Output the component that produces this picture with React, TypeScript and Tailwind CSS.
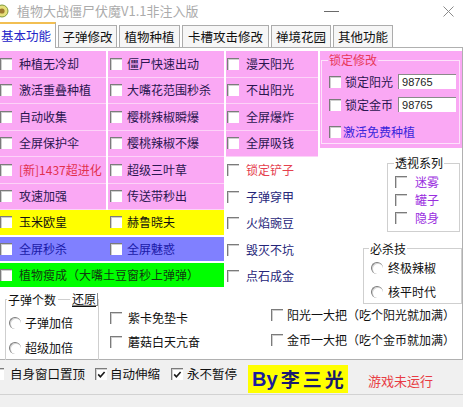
import React from "react";

const PINK = "bg-[#faa8f4]";
const INK = "text-[#2a1650]";

function Check({ on = false }: { on?: boolean }) {
  return (
    <span className="relative inline-block h-[12px] w-[12px] shrink-0 border-t border-l border-[#7b7b7b] bg-white shadow-[inset_1px_1px_0_#cfcfcf]">
      {on && (
        <svg viewBox="0 0 11 11" className="absolute left-0 top-0 h-[11px] w-[11px]">
          <path d="M2.2 5.4 L4.4 7.8 L8.6 3" fill="none" stroke="#1a1a1a" strokeWidth="1.6" />
        </svg>
      )}
    </span>
  );
}

function Radio() {
  return (
    <span className="inline-block h-[12px] w-[12px] shrink-0 rounded-full border-t border-l border-[#7b7b7b] bg-white shadow-[inset_1px_1px_0_#d6d6d6]" />
  );
}

function Opt({
  label,
  cls,
  color = INK,
  on,
}: {
  label: string;
  cls: string;
  color?: string;
  on?: boolean;
}) {
  return (
    <div className={`flex items-center ${cls}`}>
      <Check on={on} />
      <span className={`whitespace-nowrap ${color}`}>{label}</span>
    </div>
  );
}

// column geometry: x 0-106 | 108-224 | 226-318
const C1 = "w-[106px] gap-[7px] pl-0";
const C2 = "w-[116px] gap-[5px] pl-[2px]";
const C3 = "w-[92px] gap-[7px] pl-[1px]";
const CELL = `border-b border-[#fcd3f8] ${PINK}`;

const pinkRows: [string, string, string][] = [
  ["种植无冷却", "僵尸快速出动", "漫天阳光"],
  ["激活重叠种植", "大嘴花范围秒杀", "不出阳光"],
  ["自动收集", "樱桃辣椒瞬爆", "全屏爆炸"],
  ["全屏保护伞", "樱桃辣椒不爆", "全屏吸钱"],
];

function TitleBar() {
  return (
    <div className="flex h-[22px] items-center bg-white">
      <svg viewBox="0 0 14 14" className="-ml-[5px] h-[14px] w-[14px]">
        <circle cx="7" cy="7" r="6" fill="#e6df7a" stroke="#7f9a3a" strokeWidth="1" />
        <circle cx="7" cy="7" r="2.6" fill="#a07a30" />
      </svg>
      <span className="ml-[8px] text-[13px] leading-[16px] text-[#ababab]">植物大战僵尸伏魔V1.1非注入版</span>
      <span className="ml-auto mr-[104px] h-px w-[15px] bg-[#6a6a6a]" />
      <svg viewBox="0 0 11 11" className="mr-[9px] h-[11px] w-[11px]">
        <path d="M0.5 0.5 L10.5 10.5 M10.5 0.5 L0.5 10.5" stroke="#8a8a8a" strokeWidth="1" />
      </svg>
    </div>
  );
}

function Tabs() {
  const tab = "ml-[2px] flex h-[22px] items-center justify-center border-x border-t border-[#acacac] bg-[#f6f6f6] text-[12.5px] leading-[14px] text-[#111]";
  return (
    <div className="flex h-[25px] items-end bg-white">
      <div className="relative z-10 -mb-px flex h-[26px] w-[56px] items-center border-t-2 border-r border-t-[#f2bf52] border-r-[#acacac] bg-white pl-[1px] text-[12.5px] leading-[14px] text-[#2323c8]">
        基本功能
      </div>
      <div className={`${tab} w-[59px]`}>子弹修改</div>
      <div className={`${tab} w-[61px]`}>植物种植</div>
      <div className={`${tab} w-[87px]`}>卡槽攻击修改</div>
      <div className={`${tab} w-[60px]`}>禅境花园</div>
      <div className={`${tab} w-[60px]`}>其他功能</div>
    </div>
  );
}

function Grid() {
  return (
    <div className="flex w-[318px] shrink-0 flex-col">
      {pinkRows.map(([a, b, c]) => (
        <div key={a} className="flex h-[26.5px] gap-[2px]">
          <Opt label={a} cls={`${C1} ${CELL}`} />
          <Opt label={b} cls={`${C2} ${CELL}`} />
          <Opt label={c} cls={`${C3} ${CELL}`} />
        </div>
      ))}
      <div className="flex h-[26.5px] gap-[2px]">
        <Opt label="[新]1437超进化" cls={`${C1} ${CELL}`} color="text-[#e2304e]" />
        <Opt label="超级三叶草" cls={`${C2} ${CELL}`} />
        <Opt label="锁定铲子" cls={C3} color="text-[#e5404e]" />
      </div>
      <div className="flex h-[26.5px] gap-[2px]">
        <Opt label="攻速加强" cls={`${C1} ${CELL}`} />
        <Opt label="传送带秒出" cls={`${C2} ${CELL}`} />
        <Opt label="子弹穿甲" cls={C3} color="text-[#26267a]" />
      </div>
      <div className="flex h-[26.5px] gap-[2px]">
        <div className="flex h-[24.5px] w-[224px] bg-[#ffff00]">
          <Opt label="玉米欧皇" cls="w-[108px] gap-[7px]" color="text-[#111]" />
          <Opt label="赫鲁晓夫" cls="gap-[5px] pl-[2px]" color="text-[#111]" />
        </div>
        <Opt label="火焰豌豆" cls={C3} color="text-[#26267a]" />
      </div>
      <div className="flex h-[26.5px] gap-[2px]">
        <div className="flex h-[24.5px] w-[224px] bg-[#8080ff]">
          <Opt label="全屏秒杀" cls="w-[108px] gap-[7px]" color="text-[#1a1aa8]" />
          <Opt label="全屏魅惑" cls="gap-[5px] pl-[2px]" color="text-[#1a1aa8]" />
        </div>
        <Opt label="毁灭不坑" cls={C3} color="text-[#26267a]" />
      </div>
      <div className="flex h-[26.5px] gap-[2px]">
        <div className="flex h-[24px] w-[224px] bg-[#00ff00]">
          <Opt label="植物瘦成（大嘴土豆窗秒上弹弹）" cls="gap-[7px]" color="text-[#103a10]" />
        </div>
        <Opt label="点石成金" cls={C3} color="text-[#26267a]" />
      </div>
    </div>
  );
}

function Field({ value }: { value: string }) {
  return (
    <span className="flex h-[15px] w-[58px] shrink-0 items-center border-t border-l border-[#8a8a8a] bg-white pl-[3px] font-['Liberation_Sans',sans-serif] text-[11px] leading-[13px] text-[#222]">
      {value}
    </span>
  );
}

function RightColumn() {
  return (
    <div className="ml-[2px] w-[142px] shrink-0">
      <div className={`h-[97px] ${PINK} pt-[3px] pl-px pr-[2px]`}>
        <fieldset className="h-[90px] min-w-0 border border-[#fde2fb]">
          <legend className="ml-[6px] px-px leading-[12px] text-[#e8385a]">锁定修改</legend>
          <div className="flex flex-col pl-[7px] pt-[4px]">
            <div className="flex h-[23px] items-center gap-[4px] whitespace-nowrap">
              <Check />
              <span className={INK}>锁定阳光</span>
              <span className="ml-px"><Field value="98765" /></span>
            </div>
            <div className="flex h-[23px] items-center gap-[4px] whitespace-nowrap">
              <Check />
              <span className={INK}>锁定金币</span>
              <span className="ml-px"><Field value="98765" /></span>
            </div>
            <div className="mt-[4px] flex h-[23px] items-center gap-[2px] whitespace-nowrap">
              <Check />
              <span className="text-[#3b26dc]">激活免费种植</span>
            </div>
          </div>
        </fieldset>
      </div>

      <fieldset className="ml-[67px] mt-[8px] w-[73px] border border-[#cfcfcf] pb-[4px]">
        <legend className="ml-[6px] px-px leading-[14px] text-[#111]">透视系列</legend>
        <div className="flex flex-col pl-[7px] pt-[3px]">
          {["迷雾", "罐子", "隐身"].map((t) => (
            <div key={t} className="flex h-[18px] items-center gap-[8px]">
              <Check />
              <span className="text-[#9a2ee0]">{t}</span>
            </div>
          ))}
        </div>
      </fieldset>

      <fieldset className="ml-[43px] mt-[10px] w-[99px] border border-[#cfcfcf]">
        <legend className="ml-[5px] px-px leading-[13px] text-[#111]">必杀技</legend>
        <div className="flex flex-col pl-[7px]">
          <div className="flex h-[26px] items-center gap-[5px]">
            <Radio />
            <span>终极辣椒</span>
          </div>
          <div className="flex h-[22px] items-center gap-[5px]">
            <Radio />
            <span>核平时代</span>
          </div>
        </div>
      </fieldset>
    </div>
  );
}

function BottomPart() {
  return (
    <div className="flex flex-1 items-start">
      <fieldset className="ml-[5px] mt-[3.5px] w-[94px] border border-b-0 border-[#cfcfcf]">
        <legend className="ml-px flex items-center pl-px leading-[12px]">
          <span>子弹个数</span>
          <span className="mx-[2px] h-px w-[12px] bg-[#cfcfcf]" />
          <span className="border-r border-b border-[#8a8a8a] pr-px underline underline-offset-2">还原</span>
        </legend>
        <div className="mt-[5px] flex flex-col pl-[3px]">
          <div className="flex h-[24px] items-center gap-[4px]">
            <Radio />
            <span>子弹加倍</span>
          </div>
          <div className="flex h-[25px] items-center gap-[4px]">
            <Radio />
            <span>超级加倍</span>
          </div>
        </div>
      </fieldset>

      <div className="flex w-[172px] flex-col pl-[11px] pt-[16.5px]">
        <Opt label="紫卡免垫卡" cls="h-[24px] gap-[6px]" color="text-[#111]" />
        <Opt label="蘑菇白天亢奋" cls="h-[24px] gap-[6px]" color="text-[#111]" />
      </div>

      <div className="flex flex-col pt-[12.5px]">
        <Opt label="阳光一大把（吃个阳光就加满）" cls="h-[26px] gap-[4px]" color="text-[#111]" />
        <Opt label="金币一大把（吃个金币就加满）" cls="h-[24px] gap-[4px]" color="text-[#111]" />
      </div>
    </div>
  );
}

function BottomStrip() {
  return (
    <div className="flex h-[34px] items-start bg-[#f0f0f0] text-[12.5px] leading-[14px] text-[#111]">
      <div className="-ml-[8px] mt-[7px] flex h-[14px] items-center gap-[6px]">
        <Check />
        <span>自身窗口置顶</span>
      </div>
      <div className="ml-[10px] mt-[7px] flex h-[14px] items-center gap-[3px]">
        <Check on />
        <span>自动伸缩</span>
      </div>
      <div className="ml-[11px] mt-[7px] flex h-[14px] items-center gap-[4px]">
        <Check on />
        <span>永不暂停</span>
      </div>
      <div className="ml-[11px] mt-[5px] flex h-[28px] w-[100px] items-center bg-[#ffff00] pl-[4px]">
        <span className="font-['Liberation_Sans',sans-serif] text-[20px] font-bold leading-[22px] text-[#1c1ca0]">By</span>
        <span className="ml-[3px] text-[19px] font-bold leading-[22px] tracking-[3px] text-[#1a1a6e]">李三光</span>
      </div>
      <span className="ml-[20px] mt-[14px] text-[13px] text-[#e83c44]">游戏未运行</span>
    </div>
  );
}

export default function App() {
  return (
    <div className="h-[407px] w-[463px] overflow-hidden bg-[#f0f0f0] font-['Noto_Sans_CJK_SC',sans-serif] text-[12px] leading-[14px] text-[#111]">
      <TitleBar />
      <Tabs />
      <div className="flex h-[313px] w-[463px] flex-col border-t border-r border-b border-[#b0b0b0] bg-white pt-[3px]">
        <div className="flex h-[238.5px] items-start">
          <Grid />
          <RightColumn />
        </div>
        <BottomPart />
      </div>
      <BottomStrip />
      <div className="h-[13px] border-t border-[#d2d2d2] bg-[#f0f0f0]" />
    </div>
  );
}
